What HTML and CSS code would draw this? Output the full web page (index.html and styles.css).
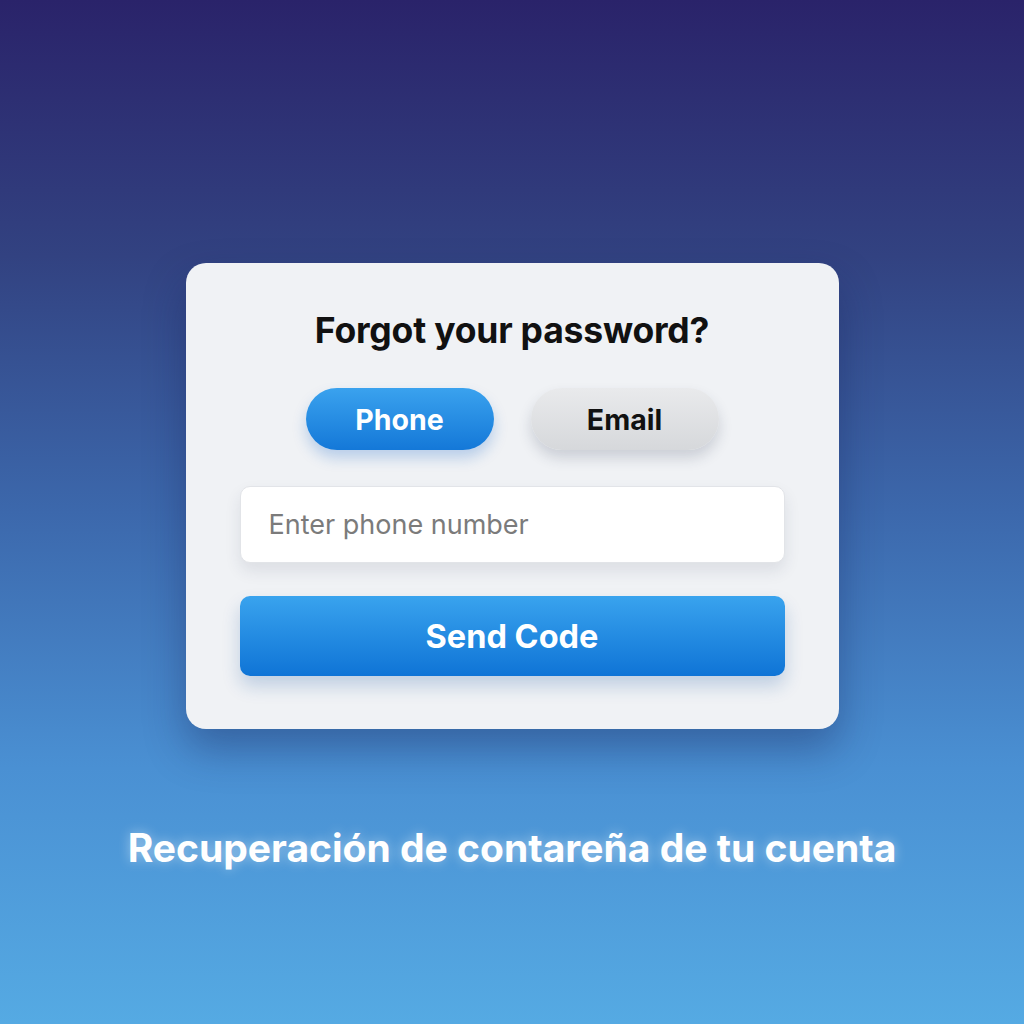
FILE: index.html
```html
<!DOCTYPE html>
<html lang="en">
<head>
  <meta charset="UTF-8">
  <meta name="viewport" content="width=device-width, initial-scale=1.0">
  <title>Forgot password</title>
  <link rel="stylesheet" href="styles.css">
</head>
<body>
  <div class="page">
    <div class="card">
      <h2 class="card-title">Forgot your password?</h2>
      <div class="tabs">
        <button class="tab tab-active">Phone</button>
        <button class="tab">Email</button>
      </div>
      <input class="field" type="text" placeholder="Enter phone number">
      <button class="send-btn">Send Code</button>
    </div>
    <p class="caption">Recuperación de contareña de tu cuenta</p>
  </div>
</body>
</html>
```

FILE: styles.css
```css
html, body {
  margin: 0;
  height: 100%;
}
body {
  font-family: Inter, "Liberation Sans", Arial, sans-serif;
  background: linear-gradient(180deg, #2a236a 0%, #324281 25%, #3c68ac 50%, #4a90d3 75%, #55aae3 100%);
}
.page {
  height: 1024px;
  display: flex;
  flex-direction: column;
  align-items: center;
  padding-top: 263px;
  box-sizing: border-box;
}
.card {
  width: 653px;
  height: 466px;
  box-sizing: border-box;
  background: #f0f2f5;
  border-radius: 20px;
  box-shadow: 0 20px 40px rgba(20, 30, 80, 0.35);
  display: flex;
  flex-direction: column;
  align-items: center;
  padding: 46px 54px 0;
}
.card-title {
  margin: 0;
  font-size: 35.5px;
  font-weight: 700;
  color: #111;
  letter-spacing: -0.2px;
  line-height: 44px;
}
.tabs {
  display: flex;
  gap: 37px;
  margin-top: 35px;
}
.tab {
  width: 188px;
  height: 62px;
  border: none;
  border-radius: 31px;
  font-family: inherit;
  font-size: 28.5px;
  font-weight: 700;
  color: #111;
  background: linear-gradient(180deg, #e9eaec 0%, #d6d8db 100%);
  box-shadow: 0 8px 14px rgba(40, 50, 80, 0.18);
}
.tab-active {
  color: #fff;
  background: linear-gradient(180deg, #3aa2ee 0%, #1478d8 100%);
  box-shadow: 0 8px 14px rgba(20, 100, 200, 0.25);
}
.field {
  margin-top: 36px;
  width: 100%;
  height: 77px;
  box-sizing: border-box;
  border: 1px solid #e2e4e8;
  border-radius: 10px;
  background: #fff;
  padding: 0 28px;
  font-family: inherit;
  font-size: 27px;
  color: #333;
  box-shadow: 0 8px 16px rgba(40, 50, 80, 0.1);
}
.field::placeholder {
  color: #7b7b7b;
}
.send-btn {
  margin-top: 33px;
  width: 100%;
  height: 80px;
  border: none;
  border-radius: 10px;
  font-family: inherit;
  font-size: 32.5px;
  font-weight: 700;
  color: #fff;
  background: linear-gradient(180deg, #39a3ee 0%, #0f74d6 100%);
  box-shadow: 0 10px 18px rgba(20, 80, 160, 0.22);
}
.caption {
  margin: 94px 0 0;
  font-size: 39px;
  font-weight: 700;
  color: #fff;
  line-height: 50px;
  text-shadow: 0 0 12px rgba(255, 255, 255, 0.45);
}
```
